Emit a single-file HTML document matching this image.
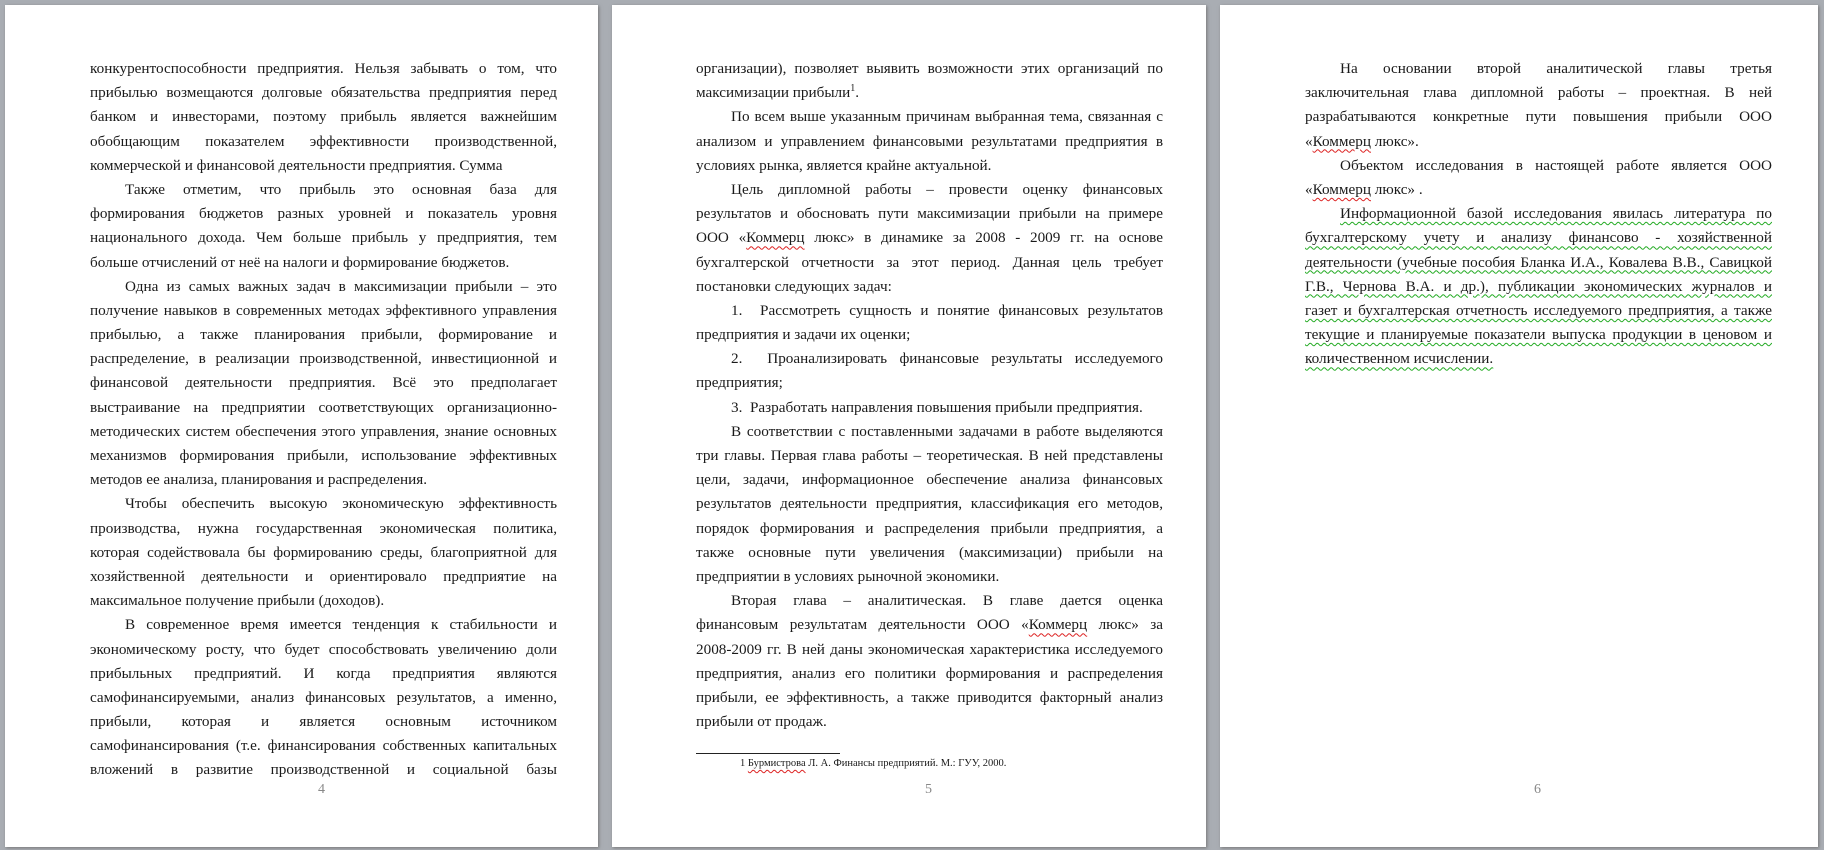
<!DOCTYPE html>
<html><head><meta charset="utf-8"><style>
body{margin:0;width:1824px;height:850px;background:#a9adb3;position:relative;overflow:hidden;font-family:"Liberation Serif",serif;color:#1a1a1a}
.pg{position:absolute;top:5px;height:842px;background:#fff;box-shadow:1px 1px 3px #777}
.txt{position:absolute;top:57px;width:467px;font-size:15.2px;line-height:24.2px}
.l{text-align:justify;text-align-last:justify;white-space:nowrap;height:24.2px;overflow:visible}
.e{text-align-last:left}
.i{padding-left:35px}
sup{line-height:0;font-size:10px}
.num{position:absolute;top:782px;font-size:14px;color:#888}
.w{text-decoration:underline wavy #2a2;text-underline-offset:3px;text-decoration-thickness:1px}
.r{text-decoration:underline wavy #d22;text-underline-offset:3px;text-decoration-thickness:1px}
</style></head><body>
<div class="pg" style="left:5px;width:593px"></div>
<div class="pg" style="left:612px;width:594px"></div>
<div class="pg" style="left:1220px;width:598px"></div>

<div class="txt" style="left:90px">
<div class="l">конкурентоспособности предприятия. Нельзя забывать о том, что</div>
<div class="l">прибылью возмещаются долговые обязательства предприятия перед</div>
<div class="l">банком и инвесторами, поэтому прибыль является важнейшим</div>
<div class="l">обобщающим показателем эффективности производственной,</div>
<div class="l e">коммерческой и финансовой деятельности предприятия. Сумма</div>
<div class="l i">Также отметим, что прибыль это основная база для</div>
<div class="l">формирования бюджетов разных уровней и показатель уровня</div>
<div class="l">национального дохода. Чем больше прибыль у предприятия, тем</div>
<div class="l e">больше отчислений от неё на налоги и формирование бюджетов.</div>
<div class="l i">Одна из самых важных задач в максимизации прибыли – это</div>
<div class="l">получение навыков в современных методах эффективного управления</div>
<div class="l">прибылью, а также планирования прибыли, формирование и</div>
<div class="l">распределение, в реализации производственной, инвестиционной и</div>
<div class="l">финансовой деятельности предприятия. Всё это предполагает</div>
<div class="l">выстраивание на предприятии соответствующих организационно-</div>
<div class="l">методических систем обеспечения этого управления, знание основных</div>
<div class="l">механизмов формирования прибыли, использование эффективных</div>
<div class="l e">методов ее анализа, планирования и распределения.</div>
<div class="l i">Чтобы обеспечить высокую экономическую эффективность</div>
<div class="l">производства, нужна государственная экономическая политика,</div>
<div class="l">которая содействовала бы формированию среды, благоприятной для</div>
<div class="l">хозяйственной деятельности и ориентировало предприятие на</div>
<div class="l e">максимальное получение прибыли (доходов).</div>
<div class="l i">В современное время имеется тенденция к стабильности и</div>
<div class="l">экономическому росту, что будет способствовать увеличению доли</div>
<div class="l">прибыльных предприятий. И когда предприятия являются</div>
<div class="l">самофинансируемыми, анализ финансовых результатов, а именно,</div>
<div class="l">прибыли, которая и является основным источником</div>
<div class="l">самофинансирования (т.е. финансирования собственных капитальных</div>
<div class="l">вложений в развитие производственной и социальной базы</div>
</div>
<div class="num" style="left:318px">4</div>

<div class="txt" style="left:696px">
<div class="l">организации), позволяет выявить возможности этих организаций по</div>
<div class="l e">максимизации прибыли<sup>1</sup>.</div>
<div class="l i">По всем выше указанным причинам выбранная тема, связанная с</div>
<div class="l">анализом и управлением финансовыми результатами предприятия в</div>
<div class="l e">условиях рынка, является крайне актуальной.</div>
<div class="l i">Цель дипломной работы – провести оценку финансовых</div>
<div class="l">результатов и обосновать пути максимизации прибыли на примере</div>
<div class="l">ООО «<span class="r">Коммерц</span> люкс» в динамике за 2008 - 2009 гг. на основе</div>
<div class="l">бухгалтерской отчетности за этот период. Данная цель требует</div>
<div class="l e">постановки следующих задач:</div>
<div class="l i">1.&nbsp; Рассмотреть сущность и понятие финансовых результатов</div>
<div class="l e">предприятия и задачи их оценки;</div>
<div class="l i">2.&nbsp; Проанализировать финансовые результаты исследуемого</div>
<div class="l e">предприятия;</div>
<div class="l i e">3.&nbsp; Разработать направления повышения прибыли предприятия.</div>
<div class="l i">В соответствии с поставленными задачами в работе выделяются</div>
<div class="l">три главы. Первая глава работы – теоретическая. В ней представлены</div>
<div class="l">цели, задачи, информационное обеспечение анализа финансовых</div>
<div class="l">результатов деятельности предприятия, классификация его методов,</div>
<div class="l">порядок формирования и распределения прибыли предприятия, а</div>
<div class="l">также основные пути увеличения (максимизации) прибыли на</div>
<div class="l e">предприятии в условиях рыночной экономики.</div>
<div class="l i">Вторая глава – аналитическая. В главе дается оценка</div>
<div class="l">финансовым результатам деятельности ООО «<span class="r">Коммерц</span> люкс» за</div>
<div class="l">2008-2009 гг. В ней даны экономическая характеристика исследуемого</div>
<div class="l">предприятия, анализ его политики формирования и распределения</div>
<div class="l">прибыли, ее эффективность, а также приводится факторный анализ</div>
<div class="l e">прибыли от продаж.</div>
</div>
<div style="position:absolute;left:696px;top:753px;width:144px;height:1px;background:#222"></div>
<div style="position:absolute;left:740px;top:758px;font-size:10.5px;white-space:nowrap">1 <span class="r">Бурмистрова</span> Л. А. Финансы предприятий. М.: ГУУ, 2000.</div>
<div class="num" style="left:925px">5</div>

<div class="txt" style="left:1305px">
<div class="l i">На основании второй аналитической главы третья</div>
<div class="l">заключительная глава дипломной работы – проектная. В ней</div>
<div class="l">разрабатываются конкретные пути повышения прибыли ООО</div>
<div class="l e">«<span class="r">Коммерц</span> люкс».</div>
<div class="l i">Объектом исследования в настоящей работе является ООО</div>
<div class="l e">«<span class="r">Коммерц</span> люкс» .</div>
<div class="l i w">Информационной базой исследования явилась литература по</div>
<div class="l w">бухгалтерскому учету и анализу финансово - хозяйственной</div>
<div class="l w">деятельности (учебные пособия Бланка И.А., Ковалева В.В., Савицкой</div>
<div class="l w">Г.В., Чернова В.А. и др.), публикации экономических журналов и</div>
<div class="l w">газет и бухгалтерская отчетность исследуемого предприятия, а также</div>
<div class="l w">текущие и планируемые показатели выпуска продукции в ценовом и</div>
<div class="l e"><span class="w">количественном исчислении.</span></div>
</div>
<div class="num" style="left:1534px">6</div>
</body></html>
